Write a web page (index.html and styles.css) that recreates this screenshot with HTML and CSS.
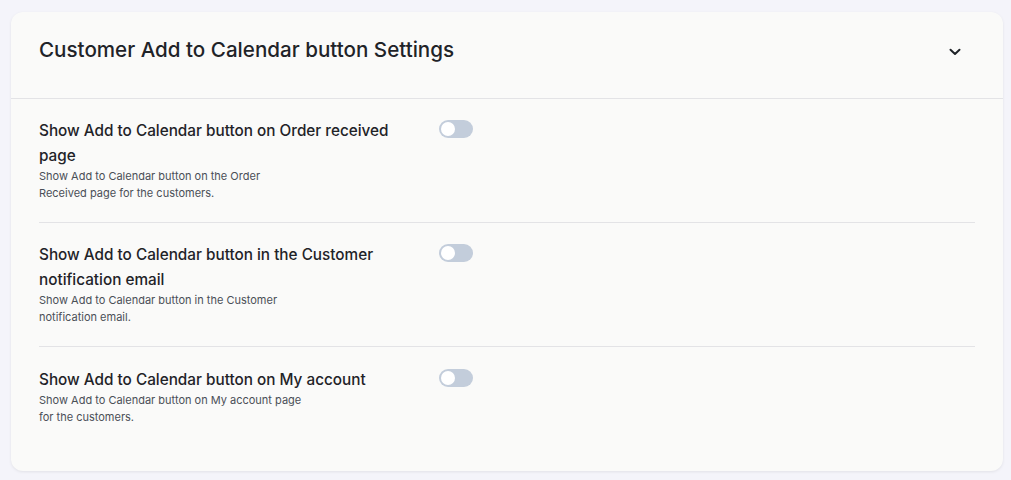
FILE: index.html
```html
<!DOCTYPE html>
<html lang="en">
<head>
  <meta charset="UTF-8">
  <meta name="viewport" content="width=device-width, initial-scale=1">
  <title>Customer Add to Calendar button Settings</title>
  <link rel="stylesheet" href="styles.css">
</head>
<body>

<div class="card">
  <div class="card-header">
    <h2>Customer Add to Calendar button Settings</h2>
    <svg class="chevron" width="12" height="8" viewBox="0 0 12 8">
      <path d="M1.5 1.8 L6 6 L10.5 1.8" fill="none" stroke="#1f2328" stroke-width="2" stroke-linecap="round" stroke-linejoin="round"/>
    </svg>
  </div>

  <div class="card-body">
    <!-- Order received page -->
    <div class="setting">
      <div class="setting-text">
        <h3>Show Add to Calendar button on Order received page</h3>
        <p>Show Add to Calendar button on the Order Received page for the customers.</p>
      </div>
      <span class="toggle"></span>
    </div>

    <!-- Notification email -->
    <div class="setting">
      <div class="setting-text">
        <h3>Show Add to Calendar button in the Customer notification email</h3>
        <p>Show Add to Calendar button in the Customer notification email.</p>
      </div>
      <span class="toggle"></span>
    </div>

    <!-- My account -->
    <div class="setting">
      <div class="setting-text">
        <h3>Show Add to Calendar button on My account</h3>
        <p>Show Add to Calendar button on My account page for the customers.</p>
      </div>
      <span class="toggle"></span>
    </div>
  </div>
</div>

</body>
</html>
```

FILE: styles.css
```css
body {
  margin: 0;
  padding: 12px 8px 10px 11px;
  font-family: Inter, 'Noto Sans', sans-serif;
  background: #f4f4fa;
  color: #1f2328;
}

.card {
  background: #fafaf9;
  border-radius: 12px;
  box-shadow: 0 1px 3px rgba(0, 0, 0, 0.08);
}

.card-header {
  display: flex;
  align-items: center;
  justify-content: space-between;
  padding: 25px 42px 35px 28px;
  border-bottom: 1px solid #e3e3e6;
}

.card-header h2 {
  margin: 0;
  font-size: 20.6px;
  line-height: 26px;
  font-weight: 500;
  color: #1f2328;
}

.chevron {
  display: block;
  margin-top: 4px;
}

.card-body {
  padding: 0 28px 25px 28px;
}

.setting {
  display: flex;
  align-items: flex-start;
  padding: 19px 0 20px;
  border-bottom: 1px solid #e3e3e6;
}

.setting:last-child {
  border-bottom: none;
  padding-top: 20px;
}

.setting-text {
  width: 400px;
}

.setting h3 {
  margin: 0;
  width: 385px;
  font-size: 15.3px;
  line-height: 25px;
  font-weight: 500;
  color: #1f2328;
}

.setting p {
  margin: 0;
  max-width: 265px;
  font-size: 11px;
  line-height: 17px;
  color: #4a4f57;
}

.toggle {
  position: relative;
  display: block;
  width: 34px;
  height: 18px;
  margin-top: 2px;
  border-radius: 9px;
  background: #c3cddb;
}

.toggle::after {
  content: "";
  position: absolute;
  top: 2px;
  left: 2px;
  width: 14px;
  height: 14px;
  border-radius: 50%;
  background: #fff;
}
```
